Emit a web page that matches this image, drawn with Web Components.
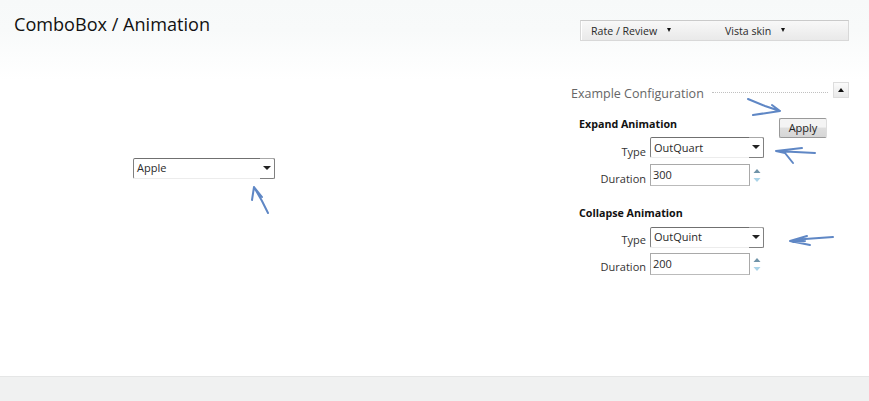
<!DOCTYPE html>
<html><head><meta charset="utf-8"><style>
html,body{margin:0;padding:0;background:#fff}
body{font-family:"Open Sans","Noto Sans",sans-serif;color:#111}
</style></head><body>
<demo-page>
  <span slot="title">ComboBox / Animation</span>
  <combo-box slot="demo" style="width:142px" value="Apple"></combo-box>
  <tool-bar slot="tools"><tool-item>Rate / Review</tool-item><tool-item>Vista skin</tool-item></tool-bar>
  <config-panel slot="config" heading="Example Configuration">
    <anim-group heading="Expand Animation" type="OutQuart" duration="300" apply style="--combo-lh:20px;--type-top:4px;--dur-top:3px"></anim-group>
    <anim-group heading="Collapse Animation" type="OutQuint" duration="200" style="--grid-top:6px;--row-gap:5px;--type-top:2px;--dur-top:2px"></anim-group>
  </config-panel>
</demo-page>
<script>
function def(name,html,init){customElements.define(name,class extends HTMLElement{constructor(){super();this.attachShadow({mode:'open'}).innerHTML=typeof html==='function'?html(this):html;}connectedCallback(){if(init)init(this);}});}
const font='"Open Sans","Noto Sans",sans-serif';
def('combo-box',`<style>
:host{display:block;box-sizing:border-box;height:21px;position:relative;background:#fff;border:1px solid #808080;border-top-color:#707070;border-bottom-color:#ececec;border-radius:2px;font:11px ${font};color:#2a2a2a}
.v{display:block;padding:0 0 0 3px;line-height:var(--combo-lh,18px)}
.b{position:absolute;right:-1px;top:-1px;bottom:-1px;width:15px;box-sizing:border-box;border:1px solid #808080;border-left:0;border-top-color:#a8a8a8;border-radius:0 2px 2px 0;display:flex;align-items:center;justify-content:center}
.b i{display:block;width:0;height:0;border:4px solid transparent;border-top:4px solid #222;border-bottom:0;margin-top:-1px}
</style><span class="v"></span><span class="b"><i></i></span>`,el=>{el.shadowRoot.querySelector('.v').textContent=el.getAttribute('value');});
def('spin-box',`<style>
:host{display:flex;align-items:center;gap:2px;font:11px ${font};color:#2a2a2a}
.t{box-sizing:border-box;width:100px;height:22px;border:1px solid #a9a9a9;border-bottom-color:#bbb;padding:0 0 0 2px;line-height:19px;background:#fff}
svg{display:block}
</style><span class="t"></span><svg width="10" height="20" viewBox="0 0 10 20"><path d="M5 4 8.5 8H1.5Z" fill="#6f93a8"/><path d="M5 17 8.5 13H1.5Z" fill="#a9d3e8"/></svg>`,el=>{el.shadowRoot.querySelector('.t').textContent=el.getAttribute('value');});
def('tool-item',`<style>
:host{display:flex;align-items:center;width:134px;box-sizing:border-box;padding-left:10px;font:10.6px ${font};color:#2a2a2a}
:host(:first-child){width:135px}
i{display:block;width:0;height:0;border:2.5px solid transparent;border-top:4px solid #111;border-bottom:0;margin-left:10px;margin-top:-2px}
</style><slot></slot><i></i>`);
def('tool-bar',`<style>
:host{display:flex;box-sizing:border-box;width:269px;height:21px;border:1px solid #d8d8d8;border-top-color:#cacaca;background:linear-gradient(#f8f8f8,#e9e9e9);box-shadow:inset 1px 0 0 #fff}
</style><slot></slot>`);
def('anim-group',el=>`<style>
:host{display:block;font:11px ${font};color:#2a2a2a;position:relative}
h4{margin:0;font:bold 10.7px ${font};color:#111;line-height:15px;padding-left:8px}
.grid{display:grid;grid-template-columns:75px auto;column-gap:4px;row-gap:var(--row-gap,6px);align-items:center;margin-top:var(--grid-top,5px);justify-content:start}
.l{text-align:right;color:#333;line-height:15px;position:relative}
.type{top:var(--type-top,3px)}
.dur{top:var(--dur-top,3px)}
.apply{position:absolute;left:208px;top:1px;width:48px;height:20px;box-sizing:border-box;padding-bottom:2px;border:1px solid #999;border-right-color:#ddd;border-radius:2px;background:linear-gradient(#f4f4f4 45%,#dedede 50%,#d6d6d6);font:11px ${font};color:#222;display:flex;align-items:center;justify-content:center}
combo-box{width:114px}
</style><h4>${el.getAttribute('heading')}</h4>
${el.hasAttribute('apply')?'<span class="apply">Apply</span>':''}
<div class="grid"><span class="l type">Type</span><combo-box value="${el.getAttribute('type')}"></combo-box>
<span class="l dur">Duration</span><spin-box value="${el.getAttribute('duration')}"></spin-box></div>`);
def('config-panel',el=>`<style>
:host{display:block;font:12.5px ${font}}
.h{display:flex;align-items:center;height:16px}
.t{color:#666;white-space:nowrap;margin-top:6px}
.r{flex:1;border-top:1px dotted #c0c0c0;margin:4px 5px 0 8px}
.c{box-sizing:border-box;width:16px;height:16px;border:1px solid #ddd;background:linear-gradient(#fbfbfb,#e9e9e9);display:flex;align-items:center;justify-content:center}
.c i{display:block;width:0;height:0;border:3px solid transparent;border-bottom:4px solid #111;border-top:0}
.b{display:flex;flex-direction:column;gap:20px;padding-top:19px}
</style><div class="h"><span class="t">${el.getAttribute('heading')}</span><span class="r"></span><span class="c"><i></i></span></div><div class="b"><slot></slot></div>`);
def('demo-page',`<style>
:host{display:grid;grid-template-rows:376px 25px;width:869px;height:401px;overflow:hidden;position:relative;background:linear-gradient(#f7f9f9 0,#f8fafa 30px,#fff 80px,#fff 100%)}
.main{display:flex;justify-content:space-between}
.left{padding:11px 0 0 14px;display:flex;flex-direction:column;width:400px}
h1{margin:0;font:normal 18.1px/26px ${font};color:#111;white-space:nowrap}
.demo{padding:121px 0 0 119px}
.right{width:278px;padding:20px 20px 0 0;display:flex;flex-direction:column;align-items:flex-end}
.cfg{width:278px;margin-top:41px}
footer{background:#f0f1f1;border-top:1px solid #e5e6e6}
svg{position:absolute;left:0;top:0;pointer-events:none}
</style>
<div class="main"><div class="left"><h1><slot name="title"></slot></h1><div class="demo"><slot name="demo"></slot></div></div>
<div class="right"><slot name="tools"></slot><div class="cfg"><slot name="config"></slot></div></div></div>
<footer></footer>
<svg width="869" height="401" fill="none" stroke="#5f87c5" stroke-width="2" stroke-linecap="round" stroke-linejoin="round">
<path d="M268 213 262 201 254 187 252 200M254 187 262 197"/>
<path d="M748 99 765 106 780 111 753 115M772 105 780 111"/>
<path d="M802 148 776 151 815 153M776 151 785 153 793 163"/>
<path d="M833 237 805 239 790 241 810 245M790 241 807 236M792 242 805 241"/>
</svg>`);
</script>
</body></html>
